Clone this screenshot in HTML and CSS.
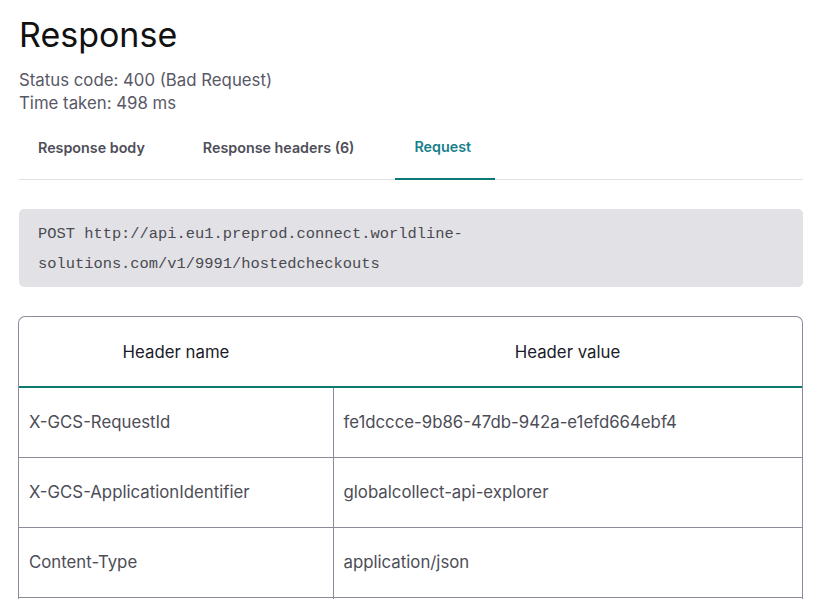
FILE: index.html
```html
<!DOCTYPE html>
<html>
<head>
<meta charset="utf-8">
<link rel="stylesheet" href="styles.css">
</head>
<body>
<main class="page">
  <h1 class="title">Response</h1>
  <div class="meta">
    <div>Status code: 400 (Bad Request)</div>
    <div>Time taken: 498 ms</div>
  </div>
  <nav class="tabs">
    <div class="tab">Response body</div>
    <div class="tab">Response headers (6)</div>
    <div class="tab active">Request</div>
  </nav>
  <pre class="code">POST http://api.eu1.preprod.connect.worldline-
solutions.com/v1/9991/hostedcheckouts</pre>
  <div class="table-wrap">
    <table class="headers">
      <thead>
        <tr><th class="col-name">Header name</th><th>Header value</th></tr>
      </thead>
      <tbody>
        <tr><td>X-GCS-RequestId</td><td>fe1dccce-9b86-47db-942a-e1efd664ebf4</td></tr>
        <tr><td>X-GCS-ApplicationIdentifier</td><td>globalcollect-api-explorer</td></tr>
        <tr><td>Content-Type</td><td>application/json</td></tr>
        <tr><td>Accept</td><td>application/json</td></tr>
      </tbody>
    </table>
  </div>
</main>
</body>
</html>
```
FILE: styles.css
```css
* { box-sizing: border-box; }
html, body { margin: 0; padding: 0; background: #fff; }
body { font-family: Inter, "Noto Sans", sans-serif; color: #1a1a1f; overflow: hidden; height: 599px; }
.page { padding: 13px 14px 0 19px; width: 817px; }
.title { margin: 0; font-size: 34px; font-weight: 400; line-height: 44px; color: #111; letter-spacing: 0; }
.meta { margin-top: 12px; font-size: 16.8px; line-height: 23px; color: #585866; }
.tabs { display: flex; margin-top: 8px; border-bottom: 1px solid #e0e0e3; height: 57px; }
.tab { padding: 0 19px 8px; margin-right: 20px; font-size: 14.3px; font-weight: 600; color: #4e4e58; display: flex; align-items: center; }
.tab:nth-child(2) { margin-right: 22px; }
.tab.active { color: #187f8a; border-bottom: 2px solid #0b7a76; margin-bottom: -1px; min-width: 100px; }
.code { margin: 29px 0 0 0; background: #e2e2e6; border-radius: 5px; padding: 10px 19px; font-family: "Liberation Mono", monospace; font-size: 15.4px; line-height: 30px; color: #4a4a52; white-space: pre; height: 78px; }
.table-wrap { margin-top: 29px; margin-left: -1px; border: 1px solid #8c8a9b; border-bottom: none; border-radius: 7px 7px 0 0; overflow: hidden; }
.headers { width: 100%; border-collapse: collapse; font-size: 16.8px; }
.headers th { font-weight: 400; color: #1a1a2a; height: 70px; border-bottom: 2px solid #0b7a6f; text-align: center; }
.headers .col-name { width: 314px; }
.headers td { height: 70px; padding: 0 10px; color: #4d4d57; border-bottom: 1px solid #8c8a9b; }
.headers td:first-child { border-right: 1px solid #8c8a9b; }
```
